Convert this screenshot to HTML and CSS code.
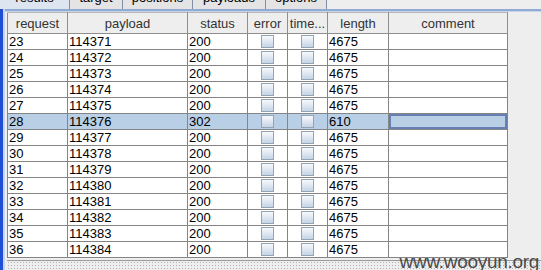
FILE: index.html
```
<!DOCTYPE html>
<html lang="en">
  <head>
    <meta charset="UTF-8" />
    <meta name="viewport" content="width=device-width, initial-scale=1.0" />
    <title>intruder results</title>
    <link rel="stylesheet" href="styles.css">
  </head>
  <body>
    <div class="window">
      <div class="frame-edge"></div>
      <div class="frame-body">
        <!-- tab strip, mostly scrolled off the top -->
        <div class="tabs">
          <div class="tab active" style="width: 70px"><span>results</span></div>
          <div class="tab" style="width: 53px"><span>target</span></div>
          <div class="tab" style="width: 70px"><span>positions</span></div>
          <div class="tab" style="width: 73px"><span>payloads</span></div>
          <div class="tab" style="width: 61px"><span>options</span></div>
        </div>
        <div class="tab-rule"></div>

        <div class="pane">
          <table class="grid">
            <colgroup>
              <col style="width: 60px">
              <col style="width: 120px">
              <col style="width: 60px">
              <col style="width: 40px">
              <col style="width: 40px">
              <col style="width: 61px">
              <col style="width: 119px">
            </colgroup>
            <thead>
              <tr>
                <th>request</th>
                <th>payload</th>
                <th>status</th>
                <th>error</th>
                <th>time...</th>
                <th>length</th>
                <th>comment</th>
              </tr>
            </thead>
            <tbody id="rows"></tbody>
          </table>
          <div class="divider"></div>
        </div>
      </div>
    </div>
    <div class="watermark">www.wooyun.org</div>

    <script>
      var rows = document.getElementById("rows");
      for (var i = 23; i <= 36; i++) {
        var hit = i === 28;
        var tr = document.createElement("tr");
        if (hit) tr.className = "selected";
        tr.innerHTML =
          "<td>" + i + "</td>" +
          "<td>" + (114348 + i) + "</td>" +
          "<td>" + (hit ? "302" : "200") + "</td>" +
          '<td class="check"><span class="box"></span></td>' +
          '<td class="check"><span class="box"></span></td>' +
          "<td>" + (hit ? "610" : "4675") + "</td>" +
          '<td class="' + (hit ? "focus" : "") + '"></td>';
        rows.appendChild(tr);
      }
    </script>
  </body>
</html>
```

FILE: styles.css
```
html, body {
  margin: 0;
  height: 100%;
  overflow: hidden;
  background: #eeeeee;
}
body {
  font-family: "Liberation Sans", Arial, sans-serif;
  font-size: 13px;
  color: #000;
  position: relative;
}
.window {
  display: flex;
  height: 270px;
}
.frame-edge {
  width: 3px;
  background: #1f4fd2;
  border-right: 2px solid #c9d3e6;
}
.frame-body {
  flex: 1;
  display: flex;
  flex-direction: column;
}
.tabs {
  display: flex;
  height: 11px;
  overflow: hidden;
  margin-left: -5px;
}
.tab {
  height: 11px;
  box-sizing: border-box;
  border-right: 1px solid #7f8fa5;
  background: #e4e4e4;
  text-align: center;
  font-size: 13px;
  color: #000;
  overflow: hidden;
}
.tab span {
  display: block;
  line-height: 15px;
  margin-top: -10px;
}
.tab.active {
  background: #dde6f0;
}
.tab-rule {
  height: 2px;
  background: #8fabd3;
  border-bottom: 1px solid #c7d5ea;
}
.pane {
  padding-left: 2px;
  flex: 1;
  display: flex;
  flex-direction: column;
}
.grid {
  border-collapse: collapse;
  table-layout: fixed;
  width: 501px;
  background: #fff;
  border-left: 1px solid #7d7d7d;
}
.grid th {
  height: 20px;
  padding: 0;
  background: #eeeeee;
  font-weight: normal;
  color: #333;
  border: 1px solid #8e8e8e;
  border-top: 1px solid #b8b8b8;
  text-align: center;
  font-size: 13px;
  white-space: nowrap;
  overflow: hidden;
}
.grid td {
  height: 15px;
  padding: 0 0 0 1px;
  border: 1px solid #858585;
  line-height: 15px;
  white-space: nowrap;
  overflow: hidden;
}
.grid tr.selected td {
  background: #b8cfe5;
}
.grid td.focus {
  box-shadow: inset 0 0 0 2px #6680b3;
}
.grid td.check {
  text-align: center;
  padding: 0;
}
.box {
  display: inline-block;
  width: 11px;
  height: 11px;
  vertical-align: -2px;
  border: 1px solid #93a3b8;
  background: linear-gradient(#f8fafc, #c6d4e6);
}
.divider {
  margin-top: 2px;
  height: 9px;
  border-top: 1px solid #9a9a9a;
  background: radial-gradient(circle, #b0b0b0 0.6px, transparent 0.8px) 0 0 / 3px 3px;
}
.watermark {
  position: absolute;
  right: 2px;
  bottom: -3px;
  font-size: 19px;
  color: #4a4a4a;
  letter-spacing: -0.3px;
}
```
